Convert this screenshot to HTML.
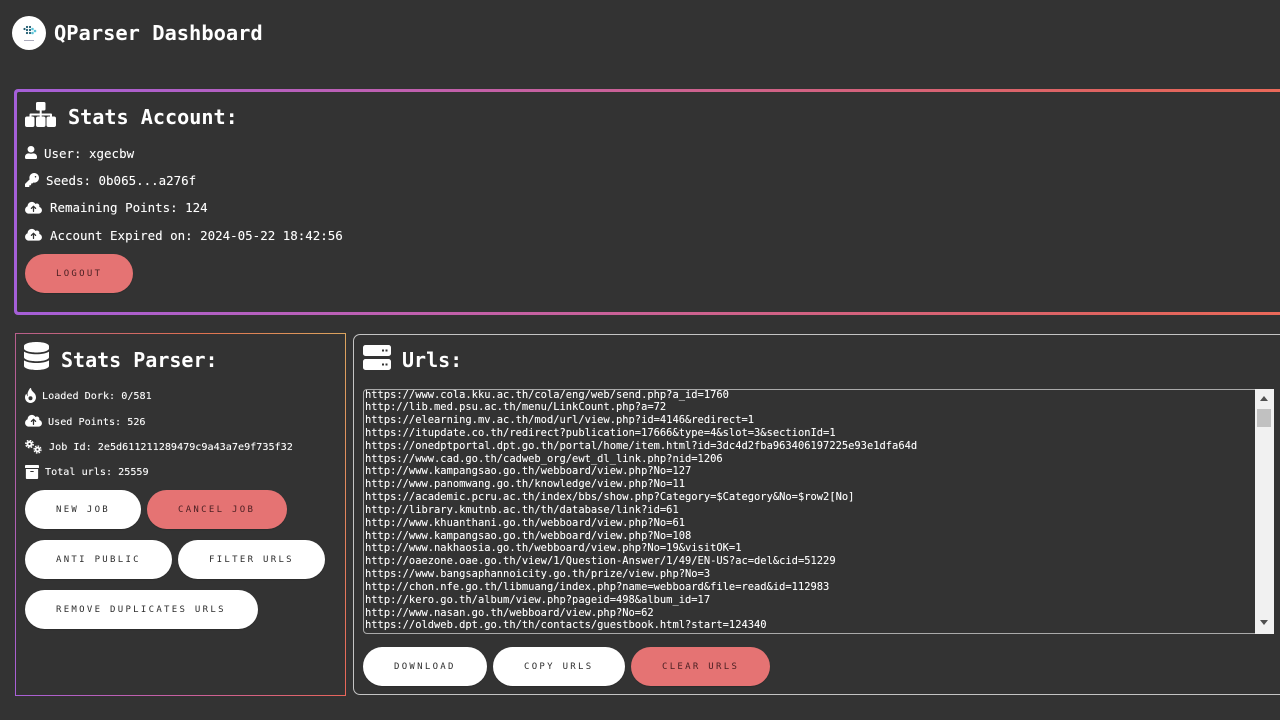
<!DOCTYPE html>
<html lang="en"><head><meta charset="utf-8"><title>QParser Dashboard</title>
<style>
html,body{margin:0;padding:0;width:1280px;height:720px;overflow:hidden;background:#333}
body{position:relative;font-family:"DejaVu Sans Mono","Liberation Mono",monospace;color:#fff}
.a{position:absolute;white-space:pre}
svg{position:absolute;fill:#fff;display:block}
.t{font-weight:700}
.l1{font-size:12.48px;line-height:16px;height:16px;text-shadow:0 0 .5px rgba(255,255,255,.5)}
.l2{font-size:10.15px;line-height:14px;height:14px;text-shadow:0 0 .5px rgba(255,255,255,.5)}
.b{position:absolute;height:39px;line-height:41px;border-radius:20px;background:#fff;color:#2c2c2c;font-size:9px;letter-spacing:2.3px;text-align:left;white-space:pre;box-sizing:border-box;padding-left:31px;box-shadow:0 1px 1px rgba(0,0,0,.15)}
.r{background:#e57373;color:#4a1f22}
.g{position:absolute;box-sizing:border-box}
</style></head><body>

<div class="a" style="left:12px;top:16px;width:34px;height:34px;border-radius:50%;background:#fff"></div>
<svg style="left:12px;top:16px" width="34" height="34" viewBox="0 0 34 34"><g fill="#1d5a6e"><circle cx="12.500" cy="13" r="1.100"/><circle cx="15" cy="11" r="1.100"/><circle cx="18" cy="11" r="1.100"/><circle cx="15" cy="14" r="1.100"/><circle cx="18" cy="14" r="1.100"/><circle cx="15" cy="17" r="1.100"/><circle cx="18" cy="17" r="1.100"/></g><g fill="#5cc4d8"><circle cx="20.500" cy="13" r="1.300"/><circle cx="23" cy="15" r="1.300"/><circle cx="20.500" cy="17" r="1.300"/></g><rect x="12" y="24" width="10" height="1" fill="#aab"/></svg>
<div class="a t" style="left:54px;top:21px;font-size:20.4px;line-height:24px">QParser Dashboard</div>

<div class="g" style="left:14px;top:89px;width:1300px;height:226px;border-radius:4px;background:linear-gradient(90deg,#a55fd8 0%,#c060b0 30%,#e0645f 85%,#ec6a58 100%)"></div>
<div class="g" style="left:17px;top:92px;width:1294px;height:220px;border-radius:2px;background:#333"></div>

<svg style="left:25px;top:102px" width="31" height="25" viewBox="0 0 31 25"><rect x="11" y="0" width="9.500" height="8.500" rx="1.500"/><rect x="14.700" y="8" width="2" height="4"/><path d="M4.500 15v-2.500a1 1 0 0 1 1-1h20.500a1 1 0 0 1 1 1V15h-2v-1.500H16.700V15h-2v-1.500H6.500V15z"/><rect x="0" y="14.500" width="9.500" height="10.500" rx="2"/><rect x="11" y="14.500" width="9.500" height="10.500" rx="2"/><rect x="21.500" y="14.500" width="9.500" height="10.500" rx="2"/></svg>
<div class="a t" style="left:68px;top:105px;font-size:20.15px;line-height:25px">Stats Account:</div>

<svg style="left:25px;top:146px" width="12" height="13" viewBox="0 0 448 512" preserveAspectRatio="none"><path d="M224 256c70.700 0 128-57.300 128-128S294.700 0 224 0 96 57.300 96 128s57.300 128 128 128zm89.600 32h-16.700c-22.200 10.200-46.900 16-72.900 16s-50.600-5.800-72.900-16h-16.700C60.200 288 0 348.200 0 422.400V464c0 26.500 21.500 48 48 48h352c26.500 0 48-21.500 48-48v-41.600c0-74.200-60.200-134.400-134.400-134.400z"/></svg>
<div class="a l1" style="left:44px;top:145.500px">User: xgecbw</div>
<svg style="left:25px;top:173px" width="14" height="14" viewBox="0 0 512 512"><path d="M512 176.001C512 273.203 433.202 352 336 352c-11.220 0-22.190-1.062-32.827-3.069l-24.012 27.014A23.999 23.999 0 0 1 261.223 384H224v40c0 13.255-10.745 24-24 24h-40v40c0 13.255-10.745 24-24 24H24c-13.255 0-24-10.745-24-24v-78.059c0-6.365 2.529-12.470 7.029-16.971l161.802-161.802C163.108 213.814 160 195.271 160 176 160 78.798 238.797.001 335.999 0 433.488-.001 512 78.511 512 176.001zM356 138c0 16 12 28 28 28s28-12 28-28-12-28-28-28-28 12-28 28z"/></svg>
<div class="a l1" style="left:46px;top:172.500px">Seeds: 0b065...a276f</div>
<svg style="left:25px;top:201px" width="17" height="13.500" viewBox="0 0 640 512"><path d="M144 480C64.500 480 0 415.500 0 336c0-62.800 40.200-116.200 96.200-135.900c-.1-2.700-.2-5.400-.2-8.100c0-88.400 71.600-160 160-160c59.300 0 111 32.200 138.700 80.200C409.900 102 428.300 96 448 96c53 0 96 43 96 96c0 12.200-2.300 23.800-6.400 34.600C596 238.400 640 290.100 640 352c0 70.700-57.300 128-128 128H144zm79-217c-9.400 9.400-9.400 24.600 0 33.900s24.600 9.400 33.900 0l39-39V392c0 13.300 10.700 24 24 24s24-10.700 24-24V257.900l39 39c9.400 9.400 24.600 9.400 33.900 0s9.400-24.600 0-33.900l-80-80c-9.400-9.400-24.600-9.400-33.900 0l-80 80z"/></svg>
<div class="a l1" style="left:50px;top:200px">Remaining Points: 124</div>
<svg style="left:25px;top:228px" width="17" height="13.500" viewBox="0 0 640 512"><path d="M144 480C64.500 480 0 415.500 0 336c0-62.800 40.200-116.200 96.200-135.900c-.1-2.700-.2-5.400-.2-8.100c0-88.400 71.600-160 160-160c59.300 0 111 32.200 138.700 80.200C409.900 102 428.300 96 448 96c53 0 96 43 96 96c0 12.200-2.300 23.800-6.400 34.600C596 238.400 640 290.100 640 352c0 70.700-57.300 128-128 128H144zm79-217c-9.400 9.400-9.400 24.600 0 33.900s24.600 9.400 33.900 0l39-39V392c0 13.300 10.700 24 24 24s24-10.700 24-24V257.900l39 39c9.400 9.400 24.600 9.400 33.900 0s9.400-24.600 0-33.900l-80-80c-9.400-9.400-24.600-9.400-33.900 0l-80 80z"/></svg>
<div class="a l1" style="left:50px;top:227.500px">Account Expired on: 2024-05-22 18:42:56</div>
<div class="b r" style="left:25px;top:254px;width:108px">LOGOUT</div>

<div class="g" style="left:15px;top:333px;width:331px;height:1px;background:linear-gradient(90deg,#b85f8c,#e0704f 55%,#dca55f)"></div>
<div class="g" style="left:15px;top:695px;width:331px;height:1px;background:linear-gradient(90deg,#a860d8,#c860a0 50%,#e8655a)"></div>
<div class="g" style="left:15px;top:333px;width:1px;height:363px;background:linear-gradient(180deg,#b85f8c,#a860d8)"></div>
<div class="g" style="left:345px;top:333px;width:1px;height:363px;background:linear-gradient(180deg,#dca55f,#e8655a)"></div>

<svg style="left:24px;top:342px" width="25" height="28" viewBox="0 0 448 512" preserveAspectRatio="none"><path d="M448 73.143v45.714C448 159.143 347.667 192 224 192S0 159.143 0 118.857V73.143C0 32.857 100.333 0 224 0s224 32.857 224 73.143zM448 176v102.857C448 319.143 347.667 352 224 352S0 319.143 0 278.857V176c48.125 33.143 136.208 48.572 224 48.572S399.874 209.143 448 176zm0 160v102.857C448 479.143 347.667 512 224 512S0 479.143 0 438.857V336c48.125 33.143 136.208 48.572 224 48.572S399.874 369.143 448 336z"/></svg>
<div class="a t" style="left:61px;top:347.500px;font-size:20px;line-height:24px">Stats Parser:</div>

<svg style="left:25px;top:388px" width="11" height="15" viewBox="0 0 384 512" preserveAspectRatio="none"><path fill-rule="evenodd" d="M216 23.860c0-23.800-30.650-32.770-44.150-13.040C48 191.850 100 220 100 288c0 0-40-30-50-90C27.800 213.160 0 261.330 0 320c0 105.870 86.130 192 192 192s192-86.130 192-192c0-170.290-168-193-168-296.140zM192 420a70 70 0 1 1 0-140 70 70 0 0 1 0 140z"/></svg>
<div class="a l2" style="left:42px;top:389.500px">Loaded Dork: 0/581</div>
<svg style="left:25px;top:414px" width="17" height="13.500" viewBox="0 0 640 512"><path d="M144 480C64.500 480 0 415.500 0 336c0-62.800 40.200-116.200 96.200-135.900c-.1-2.700-.2-5.400-.2-8.100c0-88.400 71.600-160 160-160c59.300 0 111 32.200 138.700 80.200C409.900 102 428.300 96 448 96c53 0 96 43 96 96c0 12.200-2.300 23.800-6.400 34.600C596 238.400 640 290.100 640 352c0 70.700-57.300 128-128 128H144zm79-217c-9.400 9.400-9.400 24.600 0 33.900s24.600 9.400 33.900 0l39-39V392c0 13.300 10.700 24 24 24s24-10.700 24-24V257.900l39 39c9.400 9.400 24.600 9.400 33.900 0s9.400-24.600 0-33.900l-80-80c-9.400-9.400-24.600-9.400-33.900 0l-80 80z"/></svg>
<div class="a l2" style="left:48px;top:415.500px">Used Points: 526</div>
<svg style="left:25px;top:440px" width="17" height="14" viewBox="0 0 17 14"><circle cx="4.500" cy="4" r="3" fill="#fff"/><circle cx="4.500" cy="4" r="3.700" fill="none" stroke="#fff" stroke-width="1.400" stroke-dasharray="1.700 1.200"/><circle cx="4.500" cy="4" r="1.100" fill="#333"/><circle cx="12.500" cy="9.500" r="2.800" fill="#fff"/><circle cx="12.500" cy="9.500" r="3.500" fill="none" stroke="#fff" stroke-width="1.300" stroke-dasharray="1.600 1.150"/><circle cx="12.500" cy="9.500" r="1" fill="#333"/></svg>
<div class="a l2" style="left:49px;top:441px">Job Id: 2e5d611211289479c9a43a7e9f735f32</div>
<svg style="left:25px;top:465px" width="14" height="14" viewBox="0 32 512 448" preserveAspectRatio="none"><path d="M32 448c0 17.700 14.300 32 32 32h384c17.700 0 32-14.300 32-32V160H32v288zm160-212c0-6.600 5.400-12 12-12h104c6.600 0 12 5.400 12 12v8c0 6.600-5.400 12-12 12H204c-6.600 0-12-5.400-12-12v-8zM480 32H32C14.300 32 0 46.300 0 64v48c0 8.800 7.200 16 16 16h480c8.800 0 16-7.200 16-16V64c0-17.700-14.300-32-32-32z"/></svg>
<div class="a l2" style="left:45px;top:466px">Total urls: 25559</div>

<div class="b" style="left:25px;top:490px;width:116px">NEW JOB</div>
<div class="b r" style="left:147px;top:490px;width:140px">CANCEL JOB</div>
<div class="b" style="left:25px;top:540px;width:147px">ANTI PUBLIC</div>
<div class="b" style="left:178px;top:540px;width:147px">FILTER URLS</div>
<div class="b" style="left:25px;top:590px;width:233px">REMOVE DUPLICATES URLS</div>

<div class="g" style="left:353px;top:334px;width:960px;height:361px;border:1.500px solid #c4c4c4;border-radius:7px"></div>
<svg style="left:363px;top:345px" width="28" height="25" viewBox="0 0 28 25"><path fill-rule="evenodd" d="M2.500 0h23A2.500 2.500 0 0 1 28 2.500v6a2.500 2.500 0 0 1-2.500 2.500h-23A2.500 2.500 0 0 1 0 8.500v-6A2.500 2.500 0 0 1 2.500 0zM19 4.500h2v2h-2zM22.500 4.500h2v2h-2zM2.500 14h23a2.500 2.500 0 0 1 2.500 2.500v6a2.500 2.500 0 0 1-2.500 2.500h-23A2.500 2.500 0 0 1 0 22.500v-6A2.500 2.500 0 0 1 2.500 14zM19 18.500h2v2h-2zM22.500 18.500h2v2h-2z"/></svg>
<div class="a t" style="left:402px;top:348px;font-size:20px;line-height:24px">Urls:</div>

<div class="g" style="left:363px;top:389px;width:910px;height:245px;border:1px solid #aaa;border-radius:4px;overflow:hidden">
<div class="a" style="left:1px;top:-1.500px;font-size:10.43px;line-height:12.83px;text-shadow:0 0 .4px rgba(255,255,255,.5)">https://www.cola.kku.ac.th/cola/eng/web/send.php?a_id=1760
http://lib.med.psu.ac.th/menu/LinkCount.php?a=72
https://elearning.mv.ac.th/mod/url/view.php?id=4146&amp;redirect=1
https://itupdate.co.th/redirect?publication=17666&amp;type=4&amp;slot=3&amp;sectionId=1
https://onedptportal.dpt.go.th/portal/home/item.html?id=3dc4d2fba963406197225e93e1dfa64d
https://www.cad.go.th/cadweb_org/ewt_dl_link.php?nid=1206
http://www.kampangsao.go.th/webboard/view.php?No=127
http://www.panomwang.go.th/knowledge/view.php?No=11
https://academic.pcru.ac.th/index/bbs/show.php?Category=$Category&amp;No=$row2[No]
http://library.kmutnb.ac.th/th/database/link?id=61
http://www.khuanthani.go.th/webboard/view.php?No=61
http://www.kampangsao.go.th/webboard/view.php?No=108
http://www.nakhaosia.go.th/webboard/view.php?No=19&amp;visitOK=1
http://oaezone.oae.go.th/view/1/Question-Answer/1/49/EN-US?ac=del&amp;cid=51229
https://www.bangsaphannoicity.go.th/prize/view.php?No=3
http://chon.nfe.go.th/libmuang/index.php?name=webboard&amp;file=read&amp;id=112983
http://kero.go.th/album/view.php?pageid=498&amp;album_id=17
http://www.nasan.go.th/webboard/view.php?No=62
https://oldweb.dpt.go.th/th/contacts/guestbook.html?start=124340</div>
</div>
<div class="a" style="left:1255px;top:389px;width:18.500px;height:245px;background:#f1f1f1"></div>
<div class="a" style="left:1257px;top:409px;width:14px;height:18px;background:#c1c1c1"></div>
<svg style="left:1260px;top:396px" width="8" height="5" viewBox="0 0 8 5"><path d="M4 0l4 5H0z" fill="#505050"/></svg>
<svg style="left:1260px;top:620px" width="8" height="5" viewBox="0 0 8 5"><path d="M0 0h8L4 5z" fill="#505050"/></svg>

<div class="b" style="left:363px;top:647px;width:124px">DOWNLOAD</div>
<div class="b" style="left:493px;top:647px;width:132px">COPY URLS</div>
<div class="b r" style="left:631px;top:647px;width:139px">CLEAR URLS</div>

</body></html>
